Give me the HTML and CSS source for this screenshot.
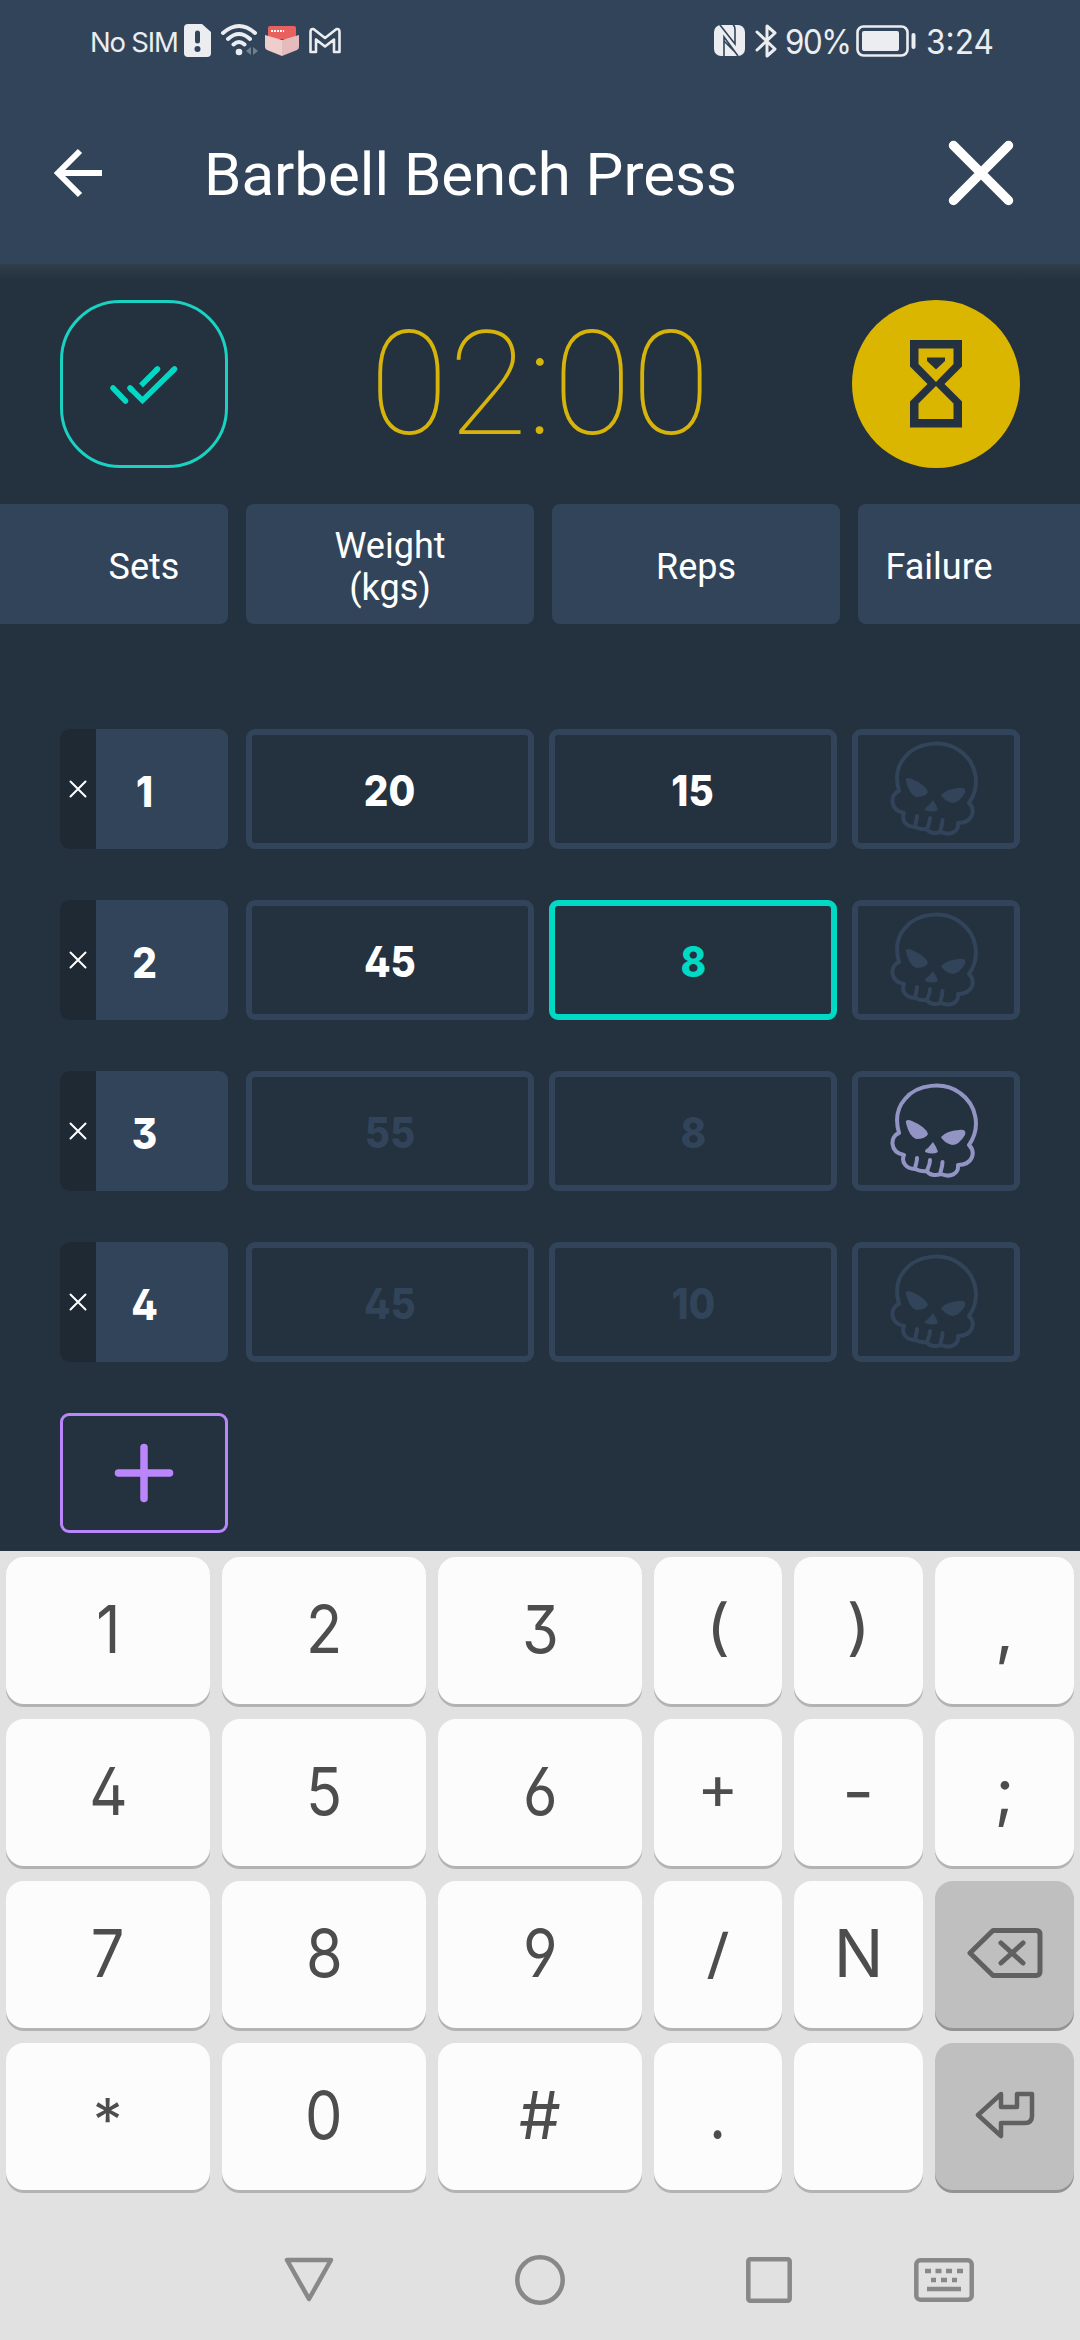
FILE: index.html
```html
<!DOCTYPE html>
<html lang="en">
<head>
<meta charset="utf-8">
<title>Barbell Bench Press</title>
<link rel="stylesheet" href="styles.css">
</head>
<body>
<svg width="0" height="0" class="defs">
  <symbol id="skull" viewBox="0 0 90 96">
    <g fill="none" stroke="currentColor" stroke-width="4" stroke-linejoin="round" stroke-linecap="round">
      <path d="M9 50 C5 36 7 25 15 16 C27 1 54 -2 70 10 C87 22 91 45 79 62 C86 69 83 82 68 82 C69 91 60 95 51 91 C45 93 39 92 37 88 C31 89 27 87 25 86 C16 86 11 79 14 72 C-1 69 0 53 9 50"/>
      <path d="M27 75 C27 80 25 83 25 86 M40 77 C40 83 37 86 37 88 M52.500 79 C52.500 86 49 90 51 91"/>
    </g>
    <path fill="currentColor" d="M16 40 C15 37 18 36 22 38 Q36 44 38 51 Q36 56 26 56 Q19 53 16 40Z M51 54 Q56 48 69 47 Q77 46 75 52 Q69 62 62 62 Q53 59 51 54Z M43 59 Q46 63 48 69 Q43 72 35 69 Q35 66 38 65Z"/>
  </symbol>
</svg>
<div class="phone">
  <header class="top">
    <div class="status">
      <div class="status-left">
        <span class="sim">No SIM</span>
        <svg class="i-sim" width="27" height="33" viewBox="0 0 27 33"><path fill="#ebedf0" d="M4 0H18L27 8V29Q27 33 23 33H4Q0 33 0 29V4Q0 0 4 0Z"/><path d="M13.500 9V17" stroke="#324459" stroke-width="5" stroke-linecap="round"/><circle cx="13.500" cy="25" r="3" fill="#324459"/></svg>
        <svg class="i-wifi" width="38" height="33" viewBox="0 0 38 33"><g fill="none" stroke="#ebedf0" stroke-width="4" stroke-linecap="round"><path d="M2 9Q18 -5 34 9M7 15Q18 5 29 15M12.500 20.500Q18 15.500 23.500 20.500"/></g><circle cx="18" cy="28" r="3.300" fill="#ebedf0"/><path fill="#71808f" d="M30 23V31L25 27ZM32 23V31L37 27Z"/></svg>
        <svg class="i-box" width="34" height="31" viewBox="0 0 34 31"><path fill="#e9615f" d="M3 3Q3 1 5 1H29Q31 1 31 3V14H3Z"/><path fill="#efcdcd" d="M0 10L17 15V31L2 25Q0 24 0 22Z"/><path fill="#e4bcbd" d="M34 10L17 15V31L32 25Q34 24 34 22Z"/><path d="M6 6H19" stroke="#fff" stroke-width="2" stroke-dasharray="2 1"/></svg>
        <svg class="i-mail" width="32" height="27" viewBox="0 0 32 27"><path fill="none" stroke="#ebedf0" stroke-width="2.600" stroke-linejoin="round" d="M1.500 25V5Q1.500 1.500 4.500 2L16 11L27.500 2Q30.500 1.500 30.500 5V25H25V12.500L16 19.500L7 12.500V25Z"/></svg>
      </div>
      <div class="status-right">
        <svg class="i-nfc" width="31" height="31" viewBox="0 0 31 31"><rect width="31" height="31" rx="7" fill="#ebedf0"/><path fill="none" stroke="#324459" stroke-width="1.600" d="M10 31V12L24 31M6 0L21 19V4Q21 1 19 0M10 16L21 27"/></svg>
        <svg class="i-bt" width="22" height="34" viewBox="0 0 22 34"><path fill="none" stroke="#ebedf0" stroke-width="3" stroke-linejoin="round" stroke-linecap="round" d="M2 8L20 25L12 32V2L20 9L2 26"/></svg>
        <span class="pct">90%</span>
        <svg class="i-bat" width="60" height="32" viewBox="0 0 60 32"><rect x="1.500" y="1.500" width="50" height="29" rx="6" fill="none" stroke="#ebedf0" stroke-width="2.600"/><rect x="6" y="6" width="37" height="20" rx="2" fill="#ebedf0"/><path d="M57.500 10V22" stroke="#ebedf0" stroke-width="4" stroke-linecap="round"/></svg>
        <span class="clock">3:24</span>
      </div>
    </div>
    <div class="appbar">
      <svg class="i-back" width="48" height="50" viewBox="0 0 48 50"><path fill="none" stroke="#fff" stroke-width="6" d="M48 25H5M26 3L4 25L26 47"/></svg>
      <h1>Barbell Bench Press</h1>
      <svg class="i-close" width="66" height="66" viewBox="0 0 66 66"><path stroke="#fff" stroke-width="9.500" stroke-linecap="round" d="M5.500 5.500L60.500 60.500M60.500 5.500L5.500 60.500"/></svg>
    </div>
  </header>
  <main>
    <section class="timer">
      <div class="done"><svg width="68" height="40" viewBox="0 0 68 40"><g fill="none" stroke="#00dac5" stroke-width="5.500"><path stroke-linecap="round" d="M3 22L15.500 35M47.500 3L46 4.500M20 22L22 24M64.500 3L62 5.500"/><path d="M47.500 3L31 19.500M20 22L32.500 34.500L64.500 3"/></g></svg></div>
      <div class="time">02:00</div>
      <div class="rest"><svg width="54" height="90" viewBox="0 0 54 90"><path fill="#24313e" fill-rule="evenodd" d="M1 1H53V27.500L35.500 45L53 62.500V88.500H1V62.500L18.500 45L1 27.500ZM9.500 9.500V25L27 43L44.500 25V9.500ZM9.500 80V64.500L27 47L44.500 64.500V80Z"/><path fill="#24313e" d="M18 18.500H36V22L27 30.500L18 22Z"/></svg></div>
    </section>
    <section class="heads">
      <div class="head sets">Sets</div><div class="head">Weight<br>(kgs)</div><div class="head">Reps</div><div class="head failure">Failure</div>
    </section>
    <section class="rows">
      <div class="row"><div class="set"><div class="del"><svg width="18" height="18" viewBox="0 0 18 18"><path d="M1.500 1.500L16.500 16.500M16.500 1.500L1.500 16.500"/></svg></div><b>1</b></div><div class="cell"><b>20</b></div><div class="cell reps"><b>15</b></div><div class="fail"><svg width="90" height="96"><use href="#skull"/></svg></div></div>
      <div class="row"><div class="set"><div class="del"><svg width="18" height="18" viewBox="0 0 18 18"><path d="M1.500 1.500L16.500 16.500M16.500 1.500L1.500 16.500"/></svg></div><b>2</b></div><div class="cell"><b>45</b></div><div class="cell reps active"><b>8</b></div><div class="fail"><svg width="90" height="96"><use href="#skull"/></svg></div></div>
      <div class="row"><div class="set"><div class="del"><svg width="18" height="18" viewBox="0 0 18 18"><path d="M1.500 1.500L16.500 16.500M16.500 1.500L1.500 16.500"/></svg></div><b>3</b></div><div class="cell ghost"><b>55</b></div><div class="cell reps ghost"><b>8</b></div><div class="fail on"><svg width="90" height="96"><use href="#skull"/></svg></div></div>
      <div class="row"><div class="set"><div class="del"><svg width="18" height="18" viewBox="0 0 18 18"><path d="M1.500 1.500L16.500 16.500M16.500 1.500L1.500 16.500"/></svg></div><b>4</b></div><div class="cell ghost"><b>45</b></div><div class="cell reps ghost"><b>10</b></div><div class="fail"><svg width="90" height="96"><use href="#skull"/></svg></div></div>
      <div class="add"><svg width="60" height="60" viewBox="0 0 60 60"><path stroke="#bb86fc" stroke-width="7.500" stroke-linecap="round" d="M4.500 30H55.500M30 4.500V55.500"/></svg></div>
    </section>
  </main>
  <section class="keyboard">
    <div class="key"><span>1</span></div><div class="key"><span>2</span></div><div class="key"><span>3</span></div><div class="key"><span class="paren">(</span></div><div class="key"><span class="paren">)</span></div><div class="key"><span class="comma">,</span></div>
    <div class="key"><span>4</span></div><div class="key"><span>5</span></div><div class="key"><span>6</span></div><div class="key"><span class="plus">+</span></div><div class="key"><span class="minus">-</span></div><div class="key"><span class="comma">;</span></div>
    <div class="key"><span>7</span></div><div class="key"><span>8</span></div><div class="key"><span>9</span></div><div class="key"><span class="slash">/</span></div><div class="key"><span class="wide">N</span></div>
    <div class="key dark"><svg width="76" height="50" viewBox="0 0 76 50"><path fill="none" stroke="#606060" stroke-width="5" stroke-linejoin="round" stroke-linecap="round" d="M26 2.500H69Q73 2.500 73 6.500V43.500Q73 47.500 69 47.500H26L3 25ZM34 15L56 35M56 15L34 35"/></svg></div>
    <div class="key"><span class="star">*</span></div><div class="key"><span>0</span></div><div class="key"><span class="wide">#</span></div><div class="key"><span>.</span></div><div class="key"></div>
    <div class="key dark"><svg width="60" height="48" viewBox="0 0 60 48"><path fill="none" stroke="#606060" stroke-width="4.500" stroke-linejoin="round" d="M26 3L3 24L26 45V32H50Q57 32 57 25V3H42V16H26Z"/></svg></div>
  </section>
  <nav class="navbar">
    <svg width="50" height="46" viewBox="0 0 50 46"><path fill="none" stroke="#888" stroke-width="4.500" stroke-linejoin="round" d="M3 3H47L25 42Z"/></svg>
    <svg width="50" height="50" viewBox="0 0 50 50"><circle cx="25" cy="25" r="22.700" fill="none" stroke="#888" stroke-width="4.500"/></svg>
    <svg width="46" height="46" viewBox="0 0 46 46"><rect x="2.300" y="2.300" width="41.400" height="41.400" rx="2" fill="none" stroke="#888" stroke-width="4.500"/></svg>
    <svg width="60" height="44" viewBox="0 0 60 44"><rect x="2.300" y="2.300" width="55.400" height="39.400" rx="4" fill="none" stroke="#888" stroke-width="4.500"/><path stroke="#888" stroke-width="4.500" d="M11 13H17M21.500 13H27.500M32 13H38M43 13H49M17 22H22M27 22H33M38 22H43M13 31H47"/></svg>
  </nav>
</div>
</body>
</html>
```
FILE: styles.css
```css
* { box-sizing: border-box; }
body { margin: 0; background: #e1e1e1; font-family: Roboto, "Liberation Sans", sans-serif; color: #fff; }
svg { display: block; flex: none; overflow: visible; }
.defs { position: absolute; }
.phone { width: 1080px; height: 2340px; display: flex; flex-direction: column; overflow: hidden; }

.top { height: 264px; background: #324459; }
.status { height: 84px; padding: 0 86px 0 90px; display: flex; justify-content: space-between; color: #ebedf0; font-family: Inter, sans-serif; }
.status-left, .status-right { display: flex; align-items: center; height: 81px; }
.sim { font-size: 27.500px; width: 88px; white-space: nowrap; letter-spacing: -1.200px; margin-right: 6px; padding-top: 3px; }
.i-wifi { margin-left: 10px; }
.i-box { margin-left: 6px; }
.i-mail { margin-left: 10px; }
.i-bt { margin-left: 10px; }
.pct { font-size: 34px; width: 64px; margin-left: 8px; letter-spacing: -1.500px; transform: scaleX(.92); transform-origin: left; white-space: nowrap; }
.i-bat { margin-left: 7px; }
.clock { font-size: 34px; width: 66px; margin-left: 12px; transform: translateX(-2px) scaleX(.93); transform-origin: left; white-space: nowrap; }
.pct, .clock { padding-top: 1px; }
.appbar { height: 180px; padding: 0 66px 0 54px; display: flex; align-items: center; }
.i-back, .i-close { margin-bottom: 2px; }
h1 { font-size: 60px; font-weight: 400; line-height: 70px; margin: 2px 0 0 102px; flex: 1; }

main { height: 1287px; background: linear-gradient(#2f3e49, #24313e 16px); padding-top: 36px; }
.timer { height: 168px; padding: 0 60px; display: flex; justify-content: space-between; }
.done, .rest { width: 168px; height: 168px; display: flex; align-items: center; justify-content: center; }
.done { border: 3px solid #1bd1c1; border-radius: 60px; padding-top: 3px; }
.rest { background: #dab600; border-radius: 50%; }
.time { font-size: 144px; font-weight: 100; line-height: 170px; color: #d6b40c; }

.heads { margin-top: 36px; height: 120px; display: grid; grid-template-columns: 228px 288px 288px 222px; gap: 18px; }
.head { background: #324459; border-radius: 8px; display: flex; align-items: center; justify-content: center; text-align: center; font-size: 36px; line-height: 42px; padding-top: 6px; }
.sets { padding-left: 60px; border-radius: 0 8px 8px 0; }
.failure { padding-right: 60px; border-radius: 8px 0 0 8px; }

.rows { margin-top: 105px; padding: 0 60px; display: flex; flex-direction: column; gap: 51px; }
.row { height: 120px; display: flex; }
.row b { font-family: Inter, sans-serif; font-feature-settings: "ss01"; font-size: 43px; font-weight: 800; transform: scaleX(.9); }
.set { width: 168px; background: #324459; border-radius: 9px; overflow: hidden; display: flex; margin-right: 18px; align-items: center; }
.del { width: 36px; height: 120px; background: #1e2933; display: flex; align-items: center; justify-content: center; }
.del path { stroke: #fff; stroke-width: 2; stroke-linecap: round; }
.set b { width: 97px; text-align: center; padding-top: 4px; }
.cell { width: 288px; border: 6px solid #324459; border-radius: 9px; display: flex; align-items: center; justify-content: center; padding-top: 2px; }
.reps { margin: 0 15px; }
.active { border-color: #00dac5; color: #00dac5; }
.ghost { color: #324459; }
.fail { width: 168px; border: 6px solid #324459; border-radius: 9px; display: flex; justify-content: center; align-items: center; color: #324459; padding-right: 3px; }
.on { color: #9295c3; }
.add { width: 168px; height: 120px; border: 3px solid #bb86fc; border-radius: 9px; display: flex; align-items: center; justify-content: center; }

.keyboard { height: 642px; padding: 6px; display: grid; grid-template-columns: 204px 204px 204px 128px 129px 139px; grid-template-rows: repeat(4, 147px); gap: 15px 12px; color: #4d4d4d; }
.key { background: #fcfcfc; border-radius: 18px; box-shadow: 0 3px 0 #b3b3b3; display: flex; align-items: center; justify-content: center; font-family: Inter, sans-serif; font-size: 66px; font-feature-settings: "ss01"; }
.key span { transform: translateY(-2px) scaleX(.9); }
.key .wide { transform: translateY(-2px); }
.key .paren { transform: translateY(-4px) scaleY(.93); }
.key .plus { transform: translateY(-6px) scale(.95, .92); }
.key .minus { transform: translateY(-2px) scaleX(1.05); }
.key .slash { transform: translateY(-2px) scaleY(.82); }
.key .comma { transform: translateY(-2px); }
.key .star { transform: translateY(2px) scale(.9); }
.dark { background: #bfbfbf; box-shadow: 0 3px 0 #939393; }
.dark svg { margin-bottom: 3px; }
.navbar { height: 147px; padding: 27px 106px 0 284px; display: grid; grid-template-columns: 231px 231px 168px 60px; align-items: center; }
```
